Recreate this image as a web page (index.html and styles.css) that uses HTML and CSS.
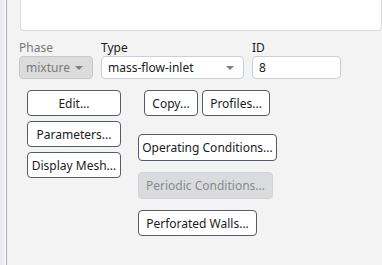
FILE: index.html
```html
<!DOCTYPE html>
<html lang="en">
<head>
  <meta charset="UTF-8" />
  <title>Boundary Conditions</title>
  <link rel="stylesheet" href="styles.css">
</head>
<body>
  <div class="frame">
    <div class="strip"></div>
    <div class="panel">
      <div class="zone-list"></div>

      <div class="fields">
        <div class="field">
          <label class="muted">Phase</label>
          <div class="select disabled">mixture<span class="arrow"></span></div>
        </div>
        <div class="field">
          <label>Type</label>
          <div class="select">mass-flow-inlet<span class="arrow"></span></div>
        </div>
        <div class="field">
          <label>ID</label>
          <div class="input">8</div>
        </div>
      </div>

      <div class="actions">
        <div class="col-left">
          <button>Edit...</button>
          <button>Parameters...</button>
          <button>Display Mesh...</button>
        </div>
        <div class="col-right">
          <div class="pair">
            <button class="copy">Copy...</button>
            <button class="profiles">Profiles...</button>
          </div>
          <button class="operating">Operating Conditions...</button>
          <button class="periodic" disabled>Periodic Conditions...</button>
          <button class="perforated">Perforated Walls...</button>
        </div>
      </div>
    </div>
  </div>
</body>
</html>
```

FILE: styles.css
```css
body {
  margin: 0;
  background-color: #f3f3f3;
  font-family: "Noto Sans", sans-serif;
  font-size: 12px;
  color: #1b1b22;
}
.frame {
  display: flex;
  height: 265px;
  overflow: hidden;
}
.strip {
  width: 4px;
  background-color: #e9ebef;
  border-right: 2px solid #f7f7f8;
}
.panel {
  flex: 1;
  border-left: 1px solid #b2b2b2;
  background-color: #f3f3f3;
}
.zone-list {
  height: 30px;
  margin-left: 13px;
  background: white;
  border: 1px solid #dcdcdc;
  border-top: none;
  border-radius: 0 0 4px 4px;
}
.fields {
  display: flex;
  gap: 8px;
  margin: 9px 0 0 12px;
}
.field label {
  display: block;
  height: 16px;
  line-height: 16px;
}
.field .muted {
  color: #777;
}
.select, .input {
  position: relative;
  box-sizing: border-box;
  height: 23px;
  line-height: 21px;
  padding-left: 6px;
  background: white;
  border: 1px solid #c9cfd8;
  border-radius: 4px;
}
.field:nth-child(1) .select { width: 74px; }
.field:nth-child(2) .select { width: 143px; }
.input { width: 89px; }
.select.disabled {
  background-color: #dcdcdc;
  border-color: #c8c8c8;
  color: #7a7a7a;
}
.arrow {
  position: absolute;
  right: 9px;
  top: 9px;
  border-left: 4px solid transparent;
  border-right: 4px solid transparent;
  border-top: 4px solid #808080;
}
.actions {
  display: flex;
  margin: 11px 0 0 20px;
  gap: 17px;
}
.col-left, .col-right {
  display: flex;
  flex-direction: column;
  align-items: flex-start;
}
.col-left {
  gap: 5px;
}
.col-left button {
  width: 94px;
}
button {
  box-sizing: border-box;
  height: 26px;
  padding: 0;
  font-family: inherit;
  font-size: 12px;
  color: #1b1b22;
  background: white;
  border: 1px solid #555c66;
  border-radius: 4px;
}
.pair {
  display: flex;
  gap: 4px;
  margin-left: 6px;
}
.copy { width: 54px; }
.profiles { width: 68px; }
.operating {
  width: 139px;
  height: 27px;
  margin-top: 18px;
}
.periodic {
  width: 135px;
  height: 27px;
  margin-top: 11px;
  background-color: #dadbdd;
  border-color: #d2d3d6;
  color: #8a8a8a;
}
.perforated {
  width: 119px;
  margin-top: 11px;
}
```
